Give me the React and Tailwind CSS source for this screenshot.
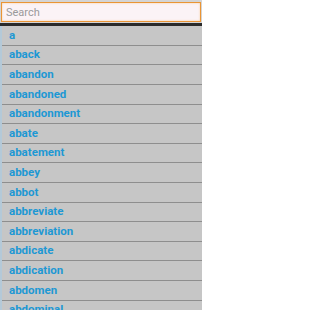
import React from "react";

const words = [
  "a",
  "aback",
  "abandon",
  "abandoned",
  "abandonment",
  "abate",
  "abatement",
  "abbey",
  "abbot",
  "abbreviate",
  "abbreviation",
  "abdicate",
  "abdication",
  "abdomen",
  "abdominal",
];

// rows are ~19.6px apart; mix 20 and 19 to stay on whole pixels
const tall = [0, 2, 3, 5, 7, 8, 10, 12, 13];

export default function App() {
  return (
    <div className="w-[202px] h-[310px] overflow-hidden bg-[#c6c6c6] font-['Roboto',sans-serif]">
      <div className="bg-[#d4d4d4] px-[1px] pt-[2px] pb-[1px]">
        <input
          type="text"
          placeholder="Search"
          className="block w-full h-[20px] bg-[#fbf3f6] border-[1.5px] border-[#ea9535] px-[4px] text-[11px] text-[#333] placeholder-[#9a9a9a] outline-none shadow-[inset_0_0_2px_#f5c890]"
        />
      </div>
      <div className="h-[3px] bg-[#2a2a2a]"></div>
      <ul className="border-l-2 border-[#b4c9d8]">
        {words.map((w, i) => (
          <li
            key={w}
            className={
              (tall.includes(i) ? "h-[20px] " : "h-[19px] ") +
              "border-b border-[#8e8e8e] flex items-center pl-[7px] text-[11.5px] font-bold text-[#1d98d4] leading-none"
            }
          >
            {w}
          </li>
        ))}
      </ul>
    </div>
  );
}
